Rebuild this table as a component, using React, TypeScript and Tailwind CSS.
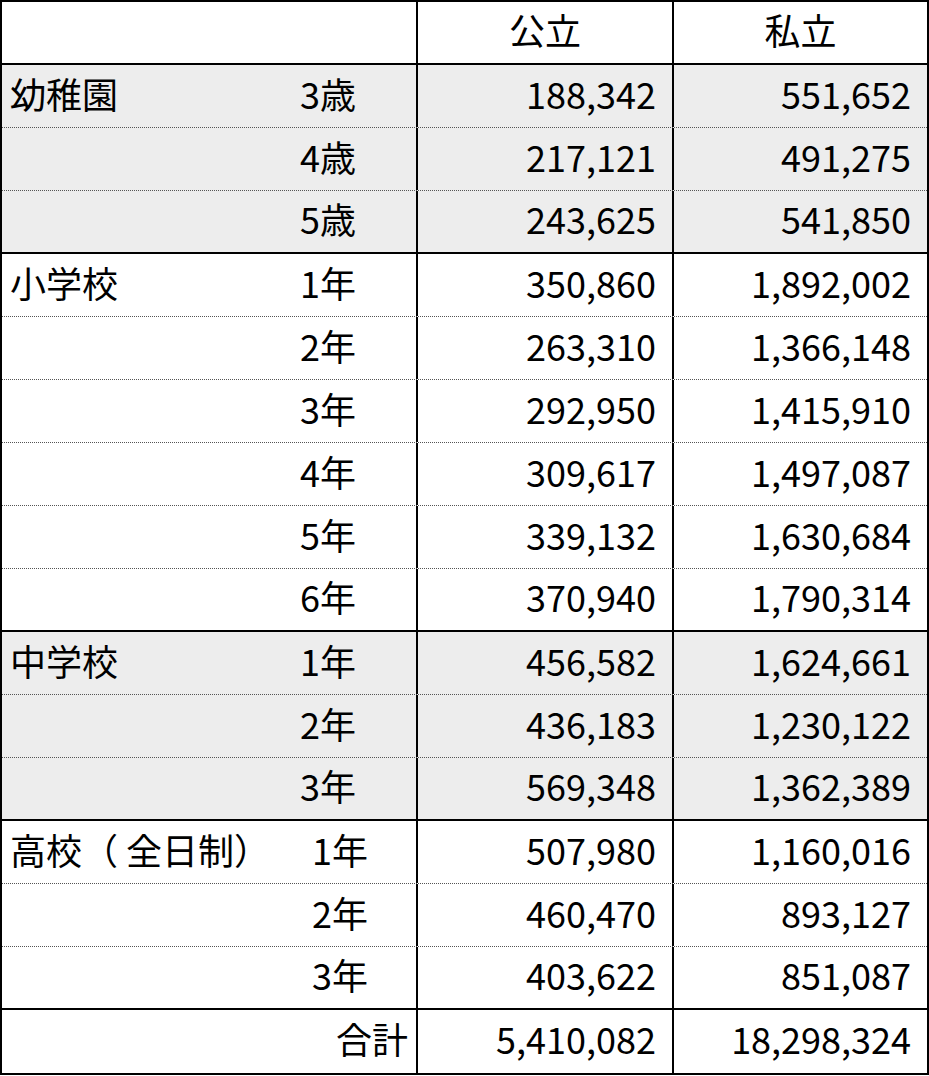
import React from 'react'

type Row = {
  category?: string
  sub: string
  pub: string
  pri: string
  shade?: boolean
  subShift?: boolean
  line: 'dotted' | 'solid' | 'none'
}

const rows: Row[] = [
  { category: '幼稚園', sub: '3歳', pub: '188,342', pri: '551,652', shade: true, line: 'dotted' },
  { sub: '4歳', pub: '217,121', pri: '491,275', shade: true, line: 'dotted' },
  { sub: '5歳', pub: '243,625', pri: '541,850', shade: true, line: 'solid' },
  { category: '小学校', sub: '1年', pub: '350,860', pri: '1,892,002', line: 'dotted' },
  { sub: '2年', pub: '263,310', pri: '1,366,148', line: 'dotted' },
  { sub: '3年', pub: '292,950', pri: '1,415,910', line: 'dotted' },
  { sub: '4年', pub: '309,617', pri: '1,497,087', line: 'dotted' },
  { sub: '5年', pub: '339,132', pri: '1,630,684', line: 'dotted' },
  { sub: '6年', pub: '370,940', pri: '1,790,314', line: 'solid' },
  { category: '中学校', sub: '1年', pub: '456,582', pri: '1,624,661', shade: true, line: 'dotted' },
  { sub: '2年', pub: '436,183', pri: '1,230,122', shade: true, line: 'dotted' },
  { sub: '3年', pub: '569,348', pri: '1,362,389', shade: true, line: 'solid' },
  { category: '高校（ 全日制）', sub: '1年', pub: '507,980', pri: '1,160,016', subShift: true, line: 'dotted' },
  { sub: '2年', pub: '460,470', pri: '893,127', subShift: true, line: 'dotted' },
  { sub: '3年', pub: '403,622', pri: '851,087', subShift: true, line: 'solid' },
]

const lineClass = {
  dotted: 'border-b border-dotted border-[#555555]',
  solid: 'border-b-2 border-black',
  none: '',
}

export default function App() {
  return (
    <div
      className="w-[929px] border-2 border-black bg-white text-black text-[36px] leading-none"
      style={{ fontFamily: '"Noto Sans CJK JP", "Noto Sans", sans-serif' }}
    >
      {/* Header */}
      <div className="flex h-[63px] border-b-2 border-black">
        <div className="w-[414px]" />
        <div className="w-[256px] border-l-2 border-black flex items-center justify-center pb-[7px]">公立</div>
        <div className="w-[255px] border-l-2 border-black flex items-center justify-center pb-[7px]">私立</div>
      </div>

      {rows.map((r, i) => (
        <div
          key={i}
          className={`flex h-[63px] ${lineClass[r.line]} ${r.shade ? 'bg-[#ededed]' : 'bg-white'}`}
        >
          <div className="w-[414px] flex items-center pl-[8px] pb-[7px]">
            <span className="w-[290px] whitespace-nowrap">{r.category ?? ''}</span>
            <span className={r.subShift ? 'ml-[12px]' : ''}>{r.sub}</span>
          </div>
          <div className="w-[256px] border-l-2 border-black flex items-center justify-end pr-[16px] pb-[7px]">{r.pub}</div>
          <div className="w-[255px] border-l-2 border-black flex items-center justify-end pr-[16px] pb-[7px]">{r.pri}</div>
        </div>
      ))}

      {/* Total */}
      <div className="flex h-[63px]">
        <div className="w-[414px] flex items-center justify-end pr-[8px] pb-[7px]">合計</div>
        <div className="w-[256px] border-l-2 border-black flex items-center justify-end pr-[16px] pb-[7px]">5,410,082</div>
        <div className="w-[255px] border-l-2 border-black flex items-center justify-end pr-[16px] pb-[7px]">18,298,324</div>
      </div>
    </div>
  )
}
